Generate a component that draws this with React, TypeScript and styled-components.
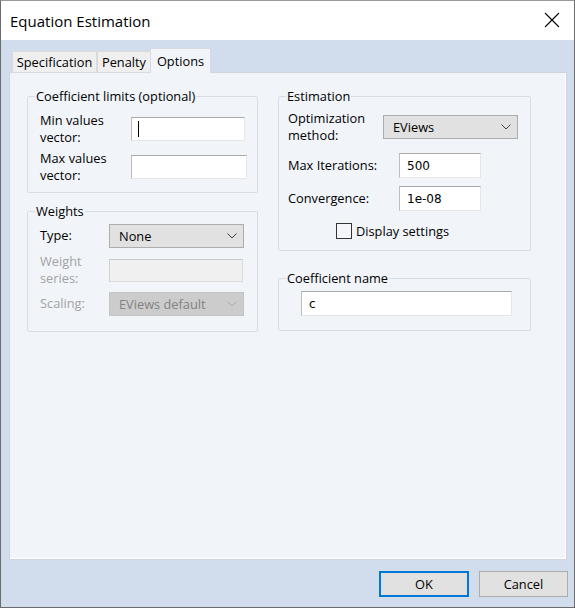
import React from "react";
import styled, { createGlobalStyle } from "styled-components";

const Global = createGlobalStyle`
  html, body { margin: 0; padding: 0; background: #ffffff; }
  body { font-family: "Segoe UI", "Open Sans", "Noto Sans", sans-serif; font-size: 12.8px; color: #000; }
  * { box-sizing: border-box; }
`;

const Window = styled.div`
  width: 575px;
  height: 608px;
  display: flex;
  flex-direction: column;
  border: 1px solid #6b6b6b;
  border-top-color: #9a9a9a;
  background: #d1ddec;
`;

const TitleBar = styled.div`
  height: 39px;
  flex: none;
  background: #ffffff;
  display: flex;
  align-items: center;
  justify-content: space-between;
  padding: 0 14px 0 9px;
  font-size: 15px;
`;

const Body = styled.div`
  flex: 1;
  display: flex;
  flex-direction: column;
  padding: 8px 7px 10px 8px;
`;

const TabStrip = styled.div`
  display: flex;
  align-items: flex-end;
  padding-left: 3px;
  height: 25px;
  position: relative;
  z-index: 1;
  margin-bottom: -1px;
`;

const Tab = styled.div<{ $active?: boolean; $w: number }>`
  width: ${(p) => p.$w}px;
  height: ${(p) => (p.$active ? 25 : 22)}px;
  padding-top: ${(p) => (p.$active ? 3 : 0)}px;
  display: flex;
  justify-content: center;
  align-items: ${(p) => (p.$active ? "flex-start" : "center")};
  background: ${(p) => (p.$active ? "#f1f4f9" : "#efefef")};
  border: 1px solid ${(p) => (p.$active ? "#d6dbe3" : "#dadada")};
  border-bottom: ${(p) => (p.$active ? "none" : "1px solid #d6dbe3")};
  margin-left: ${(p) => (p.$active ? "-1px" : "0")};
  white-space: nowrap;
`;

const Panel = styled.div`
  flex: 1;
  background: #f1f4f9;
  border: 1px solid #cfd6e0;
  box-shadow: inset -1px -1px 0 #ffffff;
  padding: 15px 17px;
  display: flex;
  gap: 20px;
  align-items: flex-start;
`;

const Column = styled.div<{ $w: number; $gap: number }>`
  width: ${(p) => p.$w}px;
  display: flex;
  flex-direction: column;
  gap: ${(p) => p.$gap}px;
`;

const Group = styled.fieldset<{ $pb: number }>`
  margin: 0;
  border: 1px solid #d9dee6;
  border-radius: 2px;
  padding: 0 8px ${(p) => p.$pb}px 8px;
  min-width: 0;
`;

const Legend = styled.legend`
  padding: 0 1px;
  line-height: 16px;
  height: 16px;
  margin-left: -1px;
`;

const Rows = styled.div<{ $indent: number }>`
  display: flex;
  flex-direction: column;
  padding-left: ${(p) => p.$indent}px;
`;

const Row = styled.div<{ $mt: number; $h: number }>`
  display: flex;
  align-items: center;
  margin-top: ${(p) => p.$mt}px;
  height: ${(p) => p.$h}px;
`;

const Label = styled.div<{ $w: number; $disabled?: boolean }>`
  width: ${(p) => p.$w}px;
  flex: none;
  line-height: 17.5px;
  color: ${(p) => (p.$disabled ? "#a3a3a3" : "#000")};
`;

const TextBox = styled.div<{ $w: number; $h?: number; $disabled?: boolean }>`
  width: ${(p) => p.$w}px;
  height: ${(p) => p.$h ?? 24}px;
  background: ${(p) => (p.$disabled ? "#f0f0f0" : "#ffffff")};
  border: 1px solid ${(p) => (p.$disabled ? "#dcdcdc" : "#e6e6e6")};
  border-top-color: ${(p) => (p.$disabled ? "#c8c8c8" : "#a9a9a9")};
  border-left-color: ${(p) => (p.$disabled ? "#d0d0d0" : "#bdbdbd")};
  display: flex;
  align-items: center;
  padding-left: 7px;
  font-family: "Segoe UI", "DejaVu Sans", sans-serif;
  font-size: 12px;
`;

const Caret = styled.span`
  width: 1px;
  height: 16px;
  background: #000;
  margin-left: -1px;
`;

const Select = styled.div<{ $w: number; $disabled?: boolean }>`
  width: ${(p) => p.$w}px;
  height: 24px;
  background: ${(p) => (p.$disabled ? "#cccccc" : "#e1e1e1")};
  border: 1px solid ${(p) => (p.$disabled ? "#c4c4c4" : "#adadad")};
  color: ${(p) => (p.$disabled ? "#838383" : "#000")};
  display: flex;
  align-items: center;
  justify-content: space-between;
  padding: 0 6px 0 9px;
`;

const CheckRow = styled.label`
  display: flex;
  align-items: center;
  gap: 4px;
  margin-left: 48px;
  margin-top: 12px;
  height: 16px;
`;

const CheckBox = styled.span`
  width: 16px;
  height: 16px;
  border: 1px solid #333333;
  background: #f4f6fa;
`;

const ButtonRow = styled.div`
  display: flex;
  justify-content: flex-end;
  gap: 10px;
  margin-top: 11px;
  margin-right: -1px;
`;

const Button = styled.div<{ $primary?: boolean }>`
  width: ${(p) => (p.$primary ? 90 : 89)}px;
  height: 26px;
  display: flex;
  align-items: center;
  justify-content: center;
  background: #e1e1e1;
  border: 1px solid ${(p) => (p.$primary ? "#0078d7" : "#adadad")};
  box-shadow: ${(p) => (p.$primary ? "inset 0 0 0 1px #0078d7" : "none")};
`;

const Chevron = ({ color }: { color: string }) => (
  <svg width="10" height="6" viewBox="0 0 10 6">
    <polyline points="0.5,0.5 5,5 9.5,0.5" fill="none" stroke={color} strokeWidth="1" />
  </svg>
);

const CloseIcon = () => (
  <svg width="16" height="16" viewBox="0 0 16 16" style={{ marginTop: -2 }}>
    <path d="M1 1 L15 15 M15 1 L1 15" stroke="#000" strokeWidth="1.1" />
  </svg>
);

export default function App() {
  return (
    <>
      <Global />
      <Window>
        <TitleBar>
          <span>Equation Estimation</span>
          <CloseIcon />
        </TitleBar>
        <Body>
          <TabStrip>
            <Tab $w={85}>Specification</Tab>
            <Tab $w={54}>Penalty</Tab>
            <Tab $w={61} $active>Options</Tab>
          </TabStrip>
          <Panel>
            <Column $w={231} $gap={10}>
              <Group $pb={9}>
                <Legend>Coefficient limits (optional)</Legend>
                <Rows $indent={4}>
                  <Row $mt={9} $h={32}>
                    <Label $w={91}>Min values<br />vector:</Label>
                    <TextBox $w={114}><Caret /></TextBox>
                  </Row>
                  <Row $mt={6} $h={32}>
                    <Label $w={91}>Max values<br />vector:</Label>
                    <TextBox $w={116} $h={24} />
                  </Row>
                </Rows>
              </Group>
              <Group $pb={15}>
                <Legend>Weights</Legend>
                <Rows $indent={4}>
                  <Row $mt={5} $h={24}>
                    <Label $w={69}>Type:</Label>
                    <Select $w={135}>
                      <span>None</span>
                      <Chevron color="#444" />
                    </Select>
                  </Row>
                  <Row $mt={6} $h={32}>
                    <Label $w={69} $disabled>Weight<br />series:</Label>
                    <TextBox $w={134} $h={23} $disabled />
                  </Row>
                  <Row $mt={6} $h={24}>
                    <Label $w={69} $disabled>Scaling:</Label>
                    <Select $w={135} $disabled>
                      <span>EViews default</span>
                      <Chevron color="#a8a8a8" />
                    </Select>
                  </Row>
                </Rows>
              </Group>
            </Column>
            <Column $w={253} $gap={19}>
              <Group $pb={11}>
                <Legend>Estimation</Legend>
                <Rows $indent={1}>
                  <Row $mt={7} $h={32}>
                    <Label $w={95}>Optimization<br />method:</Label>
                    <Select $w={135}>
                      <span>EViews</span>
                      <Chevron color="#444" />
                    </Select>
                  </Row>
                  <Row $mt={10} $h={25}>
                    <Label $w={111}>Max Iterations:</Label>
                    <TextBox $w={82} $h={25}>500</TextBox>
                  </Row>
                  <Row $mt={8} $h={25}>
                    <Label $w={111}>Convergence:</Label>
                    <TextBox $w={82} $h={25}>1e-08</TextBox>
                  </Row>
                  <CheckRow>
                    <CheckBox />
                    <span>Display settings</span>
                  </CheckRow>
                </Rows>
              </Group>
              <Group $pb={14}>
                <Legend>Coefficient name</Legend>
                <Rows $indent={14}>
                  <Row $mt={5} $h={25}>
                    <TextBox $w={211} $h={25}>c</TextBox>
                  </Row>
                </Rows>
              </Group>
            </Column>
          </Panel>
          <ButtonRow>
            <Button $primary>OK</Button>
            <Button>Cancel</Button>
          </ButtonRow>
        </Body>
      </Window>
    </>
  );
}
